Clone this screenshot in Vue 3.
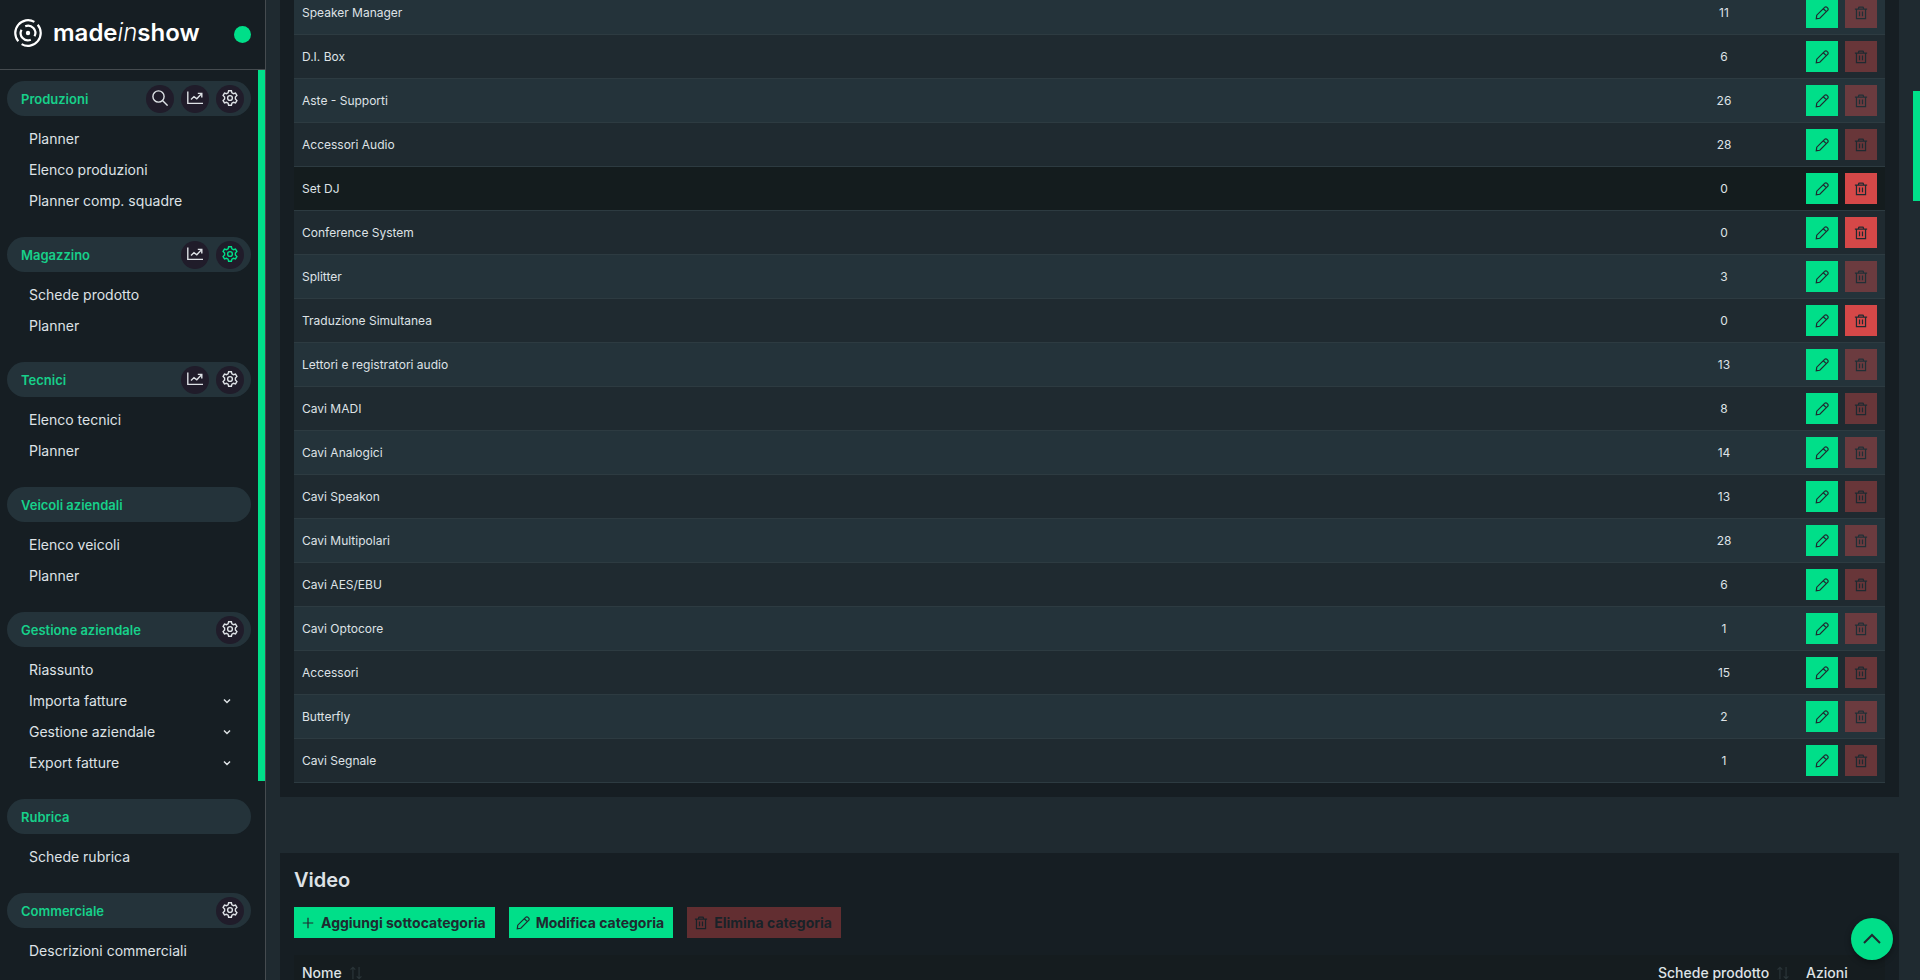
<template>
  <div class="app">
    <aside class="sidebar">
      <header class="brand">
        <a href="#" class="logo">
          <svg class="logo-mark" viewBox="0 0 28 28">
            <circle class="dot" cx="14" cy="14" r="2.200" />
            <path d="M11.200 7.200A7.300 7.300 0 0 1 20.500 17.300M16.800 20.800A7.300 7.300 0 0 1 7.500 10.700" />
            <path d="M4.300 22.300A12.800 12.800 0 0 1 20.400 2.900M23.700 5.700A12.800 12.800 0 0 1 7.600 25.100" />
          </svg>
          <span class="logo-text">made<i>in</i>show</span>
        </a>
        <span class="status"></span>
      </header>
      <nav class="menu">
        <section v-for="group in menu" :key="group.title" class="group">
          <div class="group-head">
            <h2>{{ group.title }}</h2>
            <button
              v-for="icon in group.icons"
              :key="icon"
              type="button"
              class="round"
              :class="{ active: group.active === icon }"
              :aria-label="icon"
            >
              <svg viewBox="0 0 16 16" v-html="icons[icon]"></svg>
            </button>
          </div>
          <ul>
            <li v-for="item in group.items" :key="item">
              <a href="#">
                {{ item }}
                <svg v-if="group.expandable && group.expandable.includes(item)" class="chevron" viewBox="0 0 16 16" v-html="icons.down"></svg>
              </a>
            </li>
          </ul>
        </section>
      </nav>
      <div class="thumb sidebar-thumb"></div>
    </aside>

    <main class="content">
      <section class="card scrolled">
        <table>
          <colgroup>
            <col />
            <col class="col-count" />
            <col class="col-actions" />
          </colgroup>
          <tbody>
            <tr v-for="row in rows" :key="row.name" :class="{ hover: row.name === hovered }">
              <td>{{ row.name }}</td>
              <td class="count">{{ row.count }}</td>
              <td>
                <div class="actions">
                  <button type="button" class="btn icon-btn" aria-label="Modifica">
                    <svg viewBox="0 0 16 16" v-html="icons.pencil"></svg>
                  </button>
                  <button type="button" class="btn icon-btn danger" :disabled="row.count > 0" aria-label="Elimina">
                    <svg viewBox="0 0 16 16" v-html="icons.trash"></svg>
                  </button>
                </div>
              </td>
            </tr>
          </tbody>
        </table>
      </section>

      <section class="card">
        <h1>Video</h1>
        <div class="toolbar">
          <button type="button" class="btn"><svg viewBox="0 0 16 16" v-html="icons.plus"></svg>Aggiungi sottocategoria</button>
          <button type="button" class="btn"><svg viewBox="0 0 16 16" v-html="icons.pencil"></svg>Modifica categoria</button>
          <button type="button" class="btn danger" disabled><svg viewBox="0 0 16 16" v-html="icons.trash"></svg>Elimina categoria</button>
        </div>
        <table>
          <colgroup>
            <col />
            <col class="col-count" />
            <col class="col-actions" />
          </colgroup>
          <thead>
            <tr>
              <th><span class="sortable">Nome<svg viewBox="0 0 16 16" v-html="icons.sort"></svg></span></th>
              <th><span class="sortable">Schede prodotto<svg viewBox="0 0 16 16" v-html="icons.sort"></svg></span></th>
              <th>Azioni</th>
            </tr>
          </thead>
        </table>
      </section>
    </main>

    <div class="thumb page-thumb"></div>
    <button type="button" class="to-top" aria-label="Torna su">
      <svg viewBox="0 0 20 20"><path d="M2 14l8-8 8 8" /></svg>
    </button>
  </div>
</template>

<script setup>
import { ref } from 'vue'

const icons = {
  search: '<circle cx="6.500" cy="6.500" r="5.600"/><path d="M10.500 10.500L15.600 15.600"/>',
  chart: '<path d="M.8 1.500V13.400H16M4 9.600l3-3 2.800 2.200L14 4.200M10.800 3.400h4v4"/>',
  gear: '<circle cx="8" cy="8" r="2.400"/><path d="M6.600.8h2.800l.5 2 1.600.9 2-.6 1.400 2.400-1.500 1.500v2l1.500 1.500-1.400 2.400-2-.6-1.600.9-.5 2H6.600l-.5-2-1.600-.9-2 .6-1.400-2.400L2.600 9V7L1.100 5.500l1.400-2.400 2 .6 1.600-.9z"/>',
  down: '<path d="M2 5l6 6 6-6"/>',
  plus: '<path d="M8 2v12M2 8h12"/>',
  pencil: '<path d="M1.500 14.500l.5-4L11 1.600a1.900 1.900 0 0 1 2.800 0l.6.6a1.900 1.900 0 0 1 0 2.800L5.500 14z M9.500 3.100l3.400 3.400"/>',
  trash: '<path d="M1 3.500h14M5.200 3.300V2.200a1 1 0 0 1 1-1h3.600a1 1 0 0 1 1 1v1.100M2.800 3.700v10.800h10.400V3.700M6.300 6.300v5.500M9.700 6.300v5.500"/>',
  sort: '<path d="M4.500 15V1.500M1.800 4.200l2.700-2.700 2.700 2.700M11.500 1v13.500M8.800 11.800l2.700 2.700 2.700-2.700"/>'
}

const menu = [
  { title: 'Produzioni', icons: ['search', 'chart', 'gear'], items: ['Planner', 'Elenco produzioni', 'Planner comp. squadre'] },
  { title: 'Magazzino', icons: ['chart', 'gear'], active: 'gear', items: ['Schede prodotto', 'Planner'] },
  { title: 'Tecnici', icons: ['chart', 'gear'], items: ['Elenco tecnici', 'Planner'] },
  { title: 'Veicoli aziendali', icons: [], items: ['Elenco veicoli', 'Planner'] },
  {
    title: 'Gestione aziendale',
    icons: ['gear'],
    items: ['Riassunto', 'Importa fatture', 'Gestione aziendale', 'Export fatture'],
    expandable: ['Importa fatture', 'Gestione aziendale', 'Export fatture']
  },
  { title: 'Rubrica', icons: [], items: ['Schede rubrica'] },
  { title: 'Commerciale', icons: ['gear'], items: ['Descrizioni commerciali'] }
]

const hovered = ref('Set DJ')

const rows = ref([
  { name: 'Speaker Manager', count: 11 },
  { name: 'D.I. Box', count: 6 },
  { name: 'Aste - Supporti', count: 26 },
  { name: 'Accessori Audio', count: 28 },
  { name: 'Set DJ', count: 0 },
  { name: 'Conference System', count: 0 },
  { name: 'Splitter', count: 3 },
  { name: 'Traduzione Simultanea', count: 0 },
  { name: 'Lettori e registratori audio', count: 13 },
  { name: 'Cavi MADI', count: 8 },
  { name: 'Cavi Analogici', count: 14 },
  { name: 'Cavi Speakon', count: 13 },
  { name: 'Cavi Multipolari', count: 28 },
  { name: 'Cavi AES/EBU', count: 6 },
  { name: 'Cavi Optocore', count: 1 },
  { name: 'Accessori', count: 15 },
  { name: 'Butterfly', count: 2 },
  { name: 'Cavi Segnale', count: 1 }
])
</script>

<style>
body {
  background: #1f2a30;
}
</style>

<style scoped>
.app {
  position: relative;
  display: flex;
  height: 100vh;
  overflow: hidden;
  background: #1f2a30;
  color: #dee2e6;
  font-family: Inter, "Liberation Sans", sans-serif;
  font-size: 14px;
}

.app * {
  box-sizing: border-box;
}

svg {
  flex: none;
  fill: none;
  stroke: currentColor;
  stroke-width: 1.4;
}

button {
  border: none;
  padding: 0;
  font-family: inherit;
  cursor: pointer;
}

a {
  color: inherit;
  text-decoration: none;
}

/* sidebar */
.sidebar {
  position: relative;
  flex: none;
  width: 266px;
  background: #161e23;
  border-right: 1px solid #454b4f;
}

.brand {
  display: flex;
  align-items: center;
  justify-content: space-between;
  height: 70px;
  padding: 0 14px;
  border-bottom: 1px solid #454b4f;
}

.logo {
  display: flex;
  align-items: center;
  gap: 11px;
  padding-bottom: 4px;
  color: #fff;
}

.logo-mark {
  width: 28px;
  height: 28px;
  stroke-width: 2.2;
}

.logo-mark .dot {
  fill: #fff;
  stroke: none;
}

.logo-text {
  font-size: 24px;
  line-height: 28px;
  font-weight: 600;
}

.logo-text i {
  font-weight: 300;
}

.status {
  width: 17px;
  height: 17px;
  border-radius: 50%;
  background: #00df89;
}

.menu {
  padding: 11px 14px 0 7px;
}

.group {
  margin-bottom: 20px;
}

.group-head {
  display: flex;
  align-items: center;
  gap: 7px;
  height: 35px;
  padding: 0 7px 0 14px;
  border-radius: 18px;
  background: #24333a;
}

.group-head h2 {
  flex: 1;
  margin: 0;
  color: #17d08a;
  font-size: 13px;
  font-weight: 600;
}

.round {
  display: flex;
  align-items: center;
  justify-content: center;
  width: 28px;
  height: 28px;
  padding-bottom: 2px;
  border-radius: 50%;
  background: #201c2a;
  color: #dee2e6;
}

.round svg {
  width: 16px;
  height: 16px;
}

.round.active {
  color: #00df89;
}

ul {
  margin: 0;
  padding: 8px 0 0;
  list-style: none;
}

li a {
  display: flex;
  align-items: center;
  justify-content: space-between;
  height: 31px;
  padding: 0 20px 2px 22px;
}

.chevron {
  width: 8px;
  height: 8px;
  stroke-width: 3;
}

.thumb {
  position: absolute;
  right: 0;
  width: 7px;
  background: #00df89;
}

.sidebar-thumb {
  top: 70px;
  height: 711px;
}

.page-thumb {
  top: 91px;
  height: 110px;
}

/* content */
.content {
  flex: 1;
  min-width: 0;
  padding: 0 21px 0 14px;
}

.card {
  padding: 14px;
  margin-bottom: 56px;
  background: #161e23;
}

/* the list is scrolled part of the way down */
.scrolled {
  margin-top: -23px;
}

table {
  width: 100%;
  table-layout: fixed;
  border-collapse: separate;
  border-spacing: 0;
}

.col-count {
  width: 148px;
}

.col-actions {
  width: 87px;
}

td {
  height: 44px;
  padding: 0 8px;
  border-bottom: 1px solid #2d3b41;
  font-size: 12px;
}

tbody tr {
  background: #1f2a30;
}

tbody tr:nth-child(odd) {
  background: #24333a;
}

tbody tr.hover {
  background: #141c1e;
}

.count {
  text-align: center;
}

.actions {
  display: flex;
  gap: 7px;
}

.btn {
  display: flex;
  align-items: center;
  gap: 6px;
  height: 31px;
  padding: 0 9px 0 7px;
  background: #00df89;
  color: #1f2a30;
  font-size: 14px;
  font-weight: 700;
}

.btn svg {
  width: 14px;
  height: 14px;
}

.icon-btn {
  justify-content: center;
  width: 32px;
  padding: 0;
}

.danger {
  background: #d54848;
}

.btn:disabled {
  opacity: 0.4;
  cursor: default;
}

h1 {
  margin: 0;
  font-size: 20px;
  line-height: 26px;
  font-weight: 600;
}

.toolbar {
  display: flex;
  gap: 14px;
  margin: 14px 0 17px;
}

th {
  height: 35px;
  padding: 0 8px;
  background: #151c1f;
  font-weight: 500;
  text-align: left;
  white-space: nowrap;
}

.sortable {
  display: flex;
  align-items: center;
  gap: 7px;
}

.sortable svg {
  width: 14px;
  height: 14px;
  color: #2a3438;
}

.to-top {
  position: absolute;
  right: 27px;
  bottom: 20px;
  display: flex;
  align-items: center;
  justify-content: center;
  width: 42px;
  height: 42px;
  border-radius: 50%;
  background: #00df89;
  color: #1f2a30;
  box-shadow: 0 2px 6px rgba(0, 0, 0, 0.4);
}

.to-top svg {
  width: 20px;
  height: 20px;
  stroke-width: 2;
}
</style>
